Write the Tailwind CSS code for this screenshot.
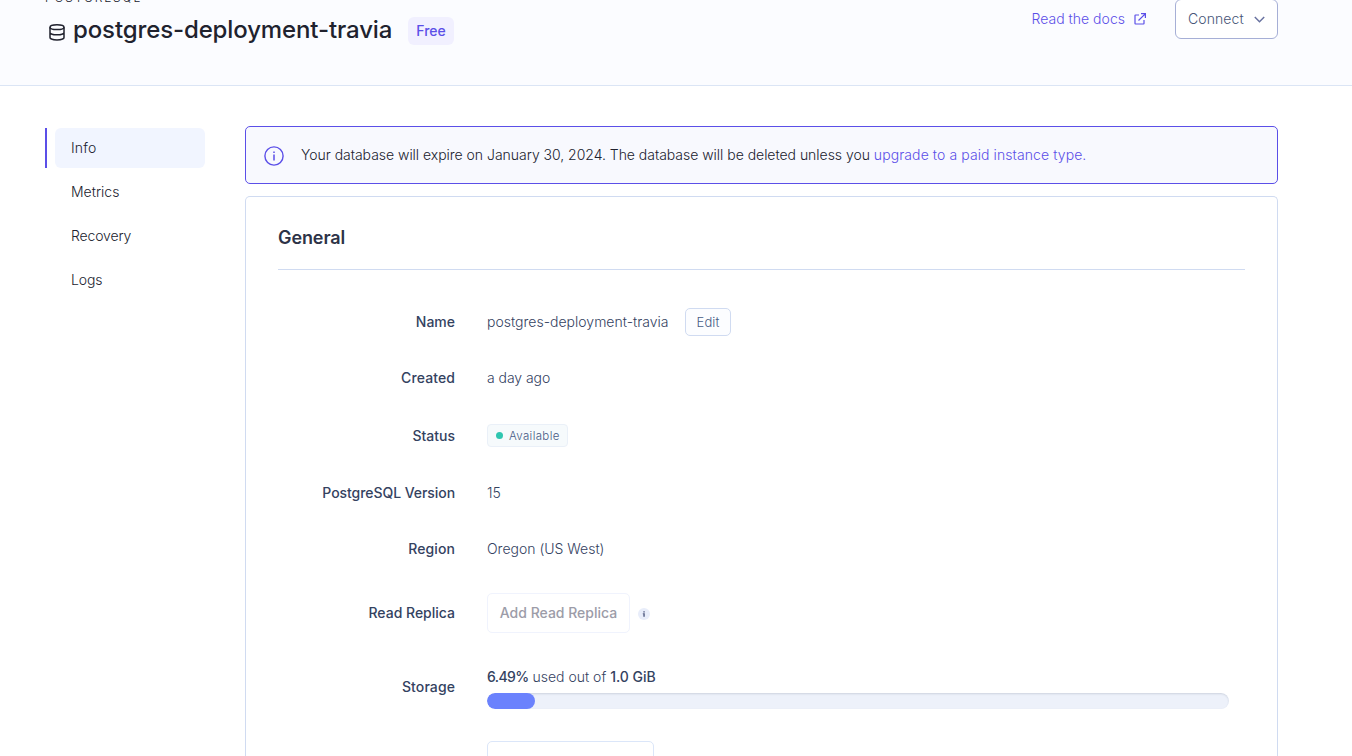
<!DOCTYPE html>
<html lang="en">
<head>
<meta charset="utf-8">
<title>postgres-deployment-travia</title>
<script src="https://cdn.jsdelivr.net/npm/@tailwindcss/browser@4"></script>
</head>
<body class="h-[756px] overflow-hidden bg-white font-['Inter',sans-serif] text-sm leading-5 font-[350] text-[#34425f]">
<header class="flex h-[86px] justify-between border-b border-[#dbe5f5] bg-[#fbfcff] pr-[74px] pl-[45px]">
  <div>
    <div class="-mt-2.5 h-4 text-xs leading-4 tracking-[1.85px] text-[#20222e]">POSTGRESQL</div>
    <div class="mt-2 flex h-8 items-center">
      <svg class="mt-1 ml-1 h-[17px] w-4" viewBox="0 0 16 17" fill="none" stroke="#20222e" stroke-width="1.5"><ellipse cx="8" cy="3.2" rx="7" ry="2.4"/><path d="M1 3.2v10.4c0 1.3 3.1 2.4 7 2.4s7-1.1 7-2.4V3.2M1 8.4c0 1.3 3.1 2.4 7 2.4s7-1.1 7-2.4"/></svg>
      <h1 class="ml-2 w-[319px] text-2xl font-medium tracking-[-0.12px] whitespace-nowrap text-[#20222e]">postgres-deployment-travia</h1>
      <span class="mt-0.5 ml-4 flex h-7 w-[46px] items-center justify-center rounded-md bg-[#f1f0ff] font-medium text-[#5b4fe8]">Free</span>
    </div>
  </div>
  <div class="flex">
    <a class="mt-[9px] flex h-5 items-center tracking-[0.02px] text-[#5b4fe8]">Read the docs
      <svg class="ml-2 size-3.5" viewBox="0 0 14 14" fill="none" stroke="currentColor" stroke-width="1.2"><path d="M6 3H2.500Q2 3 2 3.500V11.500Q2 12 2.500 12H10.500Q11 12 11 11.500V8M8 1.600H12.400V6M12.200 1.800L5.500 8.500"/></svg></a>
    <button class="-mt-px ml-7 flex h-10 w-[103px] items-center rounded-md border border-[#a6afd6] bg-white pl-3 tracking-[0.1px] text-[#475578]">Connect
      <svg class="ml-2.5 h-[7px] w-[11px]" viewBox="0 0 11 7" fill="none" stroke="#6972a0" stroke-width="1.5"><path d="M.8 1l4.700 4.700L10.200 1"/></svg></button>
  </div>
</header>
<div class="flex pl-[45px]">
  <nav class="mt-[42px] flex w-40 flex-col gap-1 tracking-[-0.15px] text-[#20222e]">
    <a class="flex h-10 border-l-2 border-[#5b4fe8] pl-2"><span class="flex flex-1 items-center rounded-md bg-[#f1f5ff] pl-4 tracking-[0.2px]">Info</span></a>
    <a class="flex h-10 items-center pl-[26px] tracking-normal">Metrics</a>
    <a class="flex h-10 items-center pl-[26px]">Recovery</a>
    <a class="flex h-10 items-center pl-[26px]">Logs</a>
  </nav>
  <main class="mt-10 ml-10 w-[1033px]">
    <div class="flex h-[58px] items-center rounded-[5px] border border-[#5b4fe8] bg-[#f8f9fe] pl-[18px] text-[#20222e]">
      <svg class="mt-0.5 mr-[17px] size-5 text-[#5b4fe8]" viewBox="0 0 20 20" fill="none" stroke="currentColor" stroke-width="1.4"><circle cx="10" cy="10" r="9.1"/><path d="M10 8.600v5.900M10 5.400v1.600" stroke-width="1.500"/></svg>
      <p class="whitespace-nowrap tracking-[-0.027px]">Your database will expire on January 30, 2024. The database will be deleted unless you <a class="tracking-[0.09px] text-[#5b4fe8]">upgrade to a paid instance type.</a></p>
    </div>
    <section class="mt-3 h-[560px] overflow-hidden rounded-t-[5px] border border-b-0 border-[#d0dbf1] px-8 pt-[27px]">
      <h2 class="h-[46px] border-b border-[#d0dbf1] text-lg leading-7 font-semibold tracking-[-0.1px] text-[#2d3347]">General</h2>
      <dl class="mt-[38px] grid grid-cols-[177px_742px] grid-rows-[28px_84px_32px_82px_30px_98px_50px_98px] items-center gap-x-8 [&>dt]:text-right [&>dt]:font-medium">
        <dt>Name</dt><dd class="flex items-center"><span class="w-[182px] tracking-[0.01px] whitespace-nowrap">postgres-deployment-travia</span><button class="ml-4 h-7 w-[46px] rounded-[5px] border border-[#d0dbf1] bg-[#fcfdff] text-[13px] tracking-[0.1px] text-[#475b85]">Edit</button></dd>
        <dt class="tracking-[0.1px]">Created</dt><dd class="tracking-[-0.05px]">a day ago</dd>
        <dt>Status</dt><dd><span class="-mt-px flex h-[23px] w-[81px] items-center rounded border border-[#eaf0f8] bg-[#f6fafc] pl-2 text-[11.5px] tracking-[0.35px] text-[#475b85]"><i class="mr-1.5 size-[7px] rounded-full bg-[#2fc6b0]"></i>Available</span></dd>
        <dt class="tracking-[-0.06px]">PostgreSQL Version</dt><dd>15</dd>
        <dt class="tracking-[0.1px]">Region</dt><dd class="tracking-[-0.01px]">Oregon (US West)</dd>
        <dt>Read Replica</dt><dd class="flex items-center"><button class="h-10 w-[143px] rounded-[5px] border border-[#f0f3fd] font-medium text-[#9c9ca8]">Add Read Replica</button>
          <svg class="mt-0.5 ml-2 size-3" viewBox="0 0 12 12"><circle cx="6" cy="6" r="6" fill="#e8edfa"/><path d="M5.300 3.200h1.500v1.200H5.300zM4.800 5.300h2v3.400H5.300V6.300h-.5z" fill="#596388"/></svg></dd>
        <dt class="tracking-[0.1px]">Storage</dt><dd class="pt-0.5"><p><b class="font-medium tracking-[-0.6px]">6.49%</b> used out of <b class="font-medium">1.0 GiB</b></p>
          <div class="mt-1.5 h-4 overflow-hidden rounded-full bg-[#edf1fa]"><div class="h-4 w-full rounded-full shadow-[inset_0_1px_2px_rgba(60,80,100,0.18)]"><div class="h-4 rounded-full bg-[#6b82fd]" style="width:6.49%"></div></div></div></dd>
        <dt class="text-[#20222e]"><span class="block pt-px leading-5">Datadog API Key</span></dt><dd><button class="h-10 w-[167px] rounded-[5px] border border-[#dbe6f9] pt-px font-medium tracking-[-0.1px] text-[#20222e]">Add Datadog API Key</button></dd>
      </dl>
    </section>
  </main>
</div>
</body>
</html>
